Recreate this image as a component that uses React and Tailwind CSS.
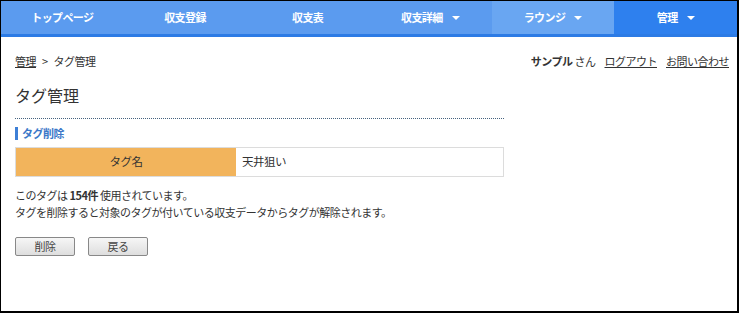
// タグ削除画面 - 管理 > タグ管理
const font = { fontFamily: '"Noto Sans CJK JP", "Noto Sans", sans-serif' };

function Caret() {
  return <span className="ml-[9px] inline-block border-x-[4px] border-t-[4px] border-x-transparent border-t-white align-middle"></span>;
}

const navItems = [
  { label: 'トップページ' },
  { label: '収支登録' },
  { label: '収支表' },
  { label: '収支詳細', caret: true },
  { label: 'ラウンジ', caret: true, hover: true },
  { label: '管理', caret: true, active: true },
];

export default function App() {
  return (
    <div style={font} className="h-[313px] w-[739px] overflow-hidden border-l border-t border-r-2 border-b-2 border-black bg-white text-[#333]">
      {/* グローバルナビ */}
      <nav className="grid h-[36px] grid-cols-6 border-b-[3px] border-[#2c7be5] bg-[#5b9bef]">
        {navItems.map((item) => (
          <div
            key={item.label}
            className={
              'flex items-center justify-center text-[11px] font-bold tracking-[-0.6px] text-white ' +
              (item.active ? 'bg-[#2e80ee]' : item.hover ? 'bg-[#69a6f2]' : '')
            }
          >
            {item.label}
            {item.caret && <Caret />}
          </div>
        ))}
      </nav>

      <div className="px-[14px] text-[11px] tracking-[-0.5px]">
        {/* パンくず・ユーザー */}
        <div className="-mr-[6px] mt-[15px] flex items-center justify-between text-[11px] leading-[18px]">
          <div>
            <span className="underline">管理</span>
            <span className="mx-[6px]">&gt;</span>
            <span>タグ管理</span>
          </div>
          <div className="flex gap-[9px]">
            <span><b>サンプル</b> さん</span>
            <span className="underline">ログアウト</span>
            <span className="underline">お問い合わせ</span>
          </div>
        </div>

        <div className="w-[489px]">
          <h1 className="mt-[14px] text-[16px] leading-[22px] font-normal tracking-normal">タグ管理</h1>
          <div className="mt-[12px] border-b border-dotted border-[#45627e]"></div>

          <h2 className="mt-[8px] border-l-[3px] border-[#3d7fd6] pl-[4px] text-[11px] leading-[13px] font-bold text-[#3b78c8]">
            タグ削除
          </h2>

          <div className="mt-[7px] flex h-[30px] border border-[#dcdcdc] text-[11.5px]">
            <div className="flex w-[220px] items-center justify-center bg-[#f2b45c]">タグ名</div>
            <div className="flex flex-1 items-center pl-[6px]">天井狙い</div>
          </div>

          <p className="mt-[10px] leading-[17px]">
            このタグは <b>154件</b> 使用されています。
            <br />
            タグを削除すると対象のタグが付いている収支データからタグが解除されます。
          </p>

          <div className="mt-[16px] flex gap-[13px]">
            <button className="h-[19px] w-[60px] rounded-[2px] border border-[#888] bg-gradient-to-b from-[#f6f6f6] to-[#dedede] text-[11px] text-[#444]">
              削除
            </button>
            <button className="h-[19px] w-[60px] rounded-[2px] border border-[#888] bg-gradient-to-b from-[#f6f6f6] to-[#dedede] text-[11px] text-[#444]">
              戻る
            </button>
          </div>
        </div>
      </div>
    </div>
  );
}
